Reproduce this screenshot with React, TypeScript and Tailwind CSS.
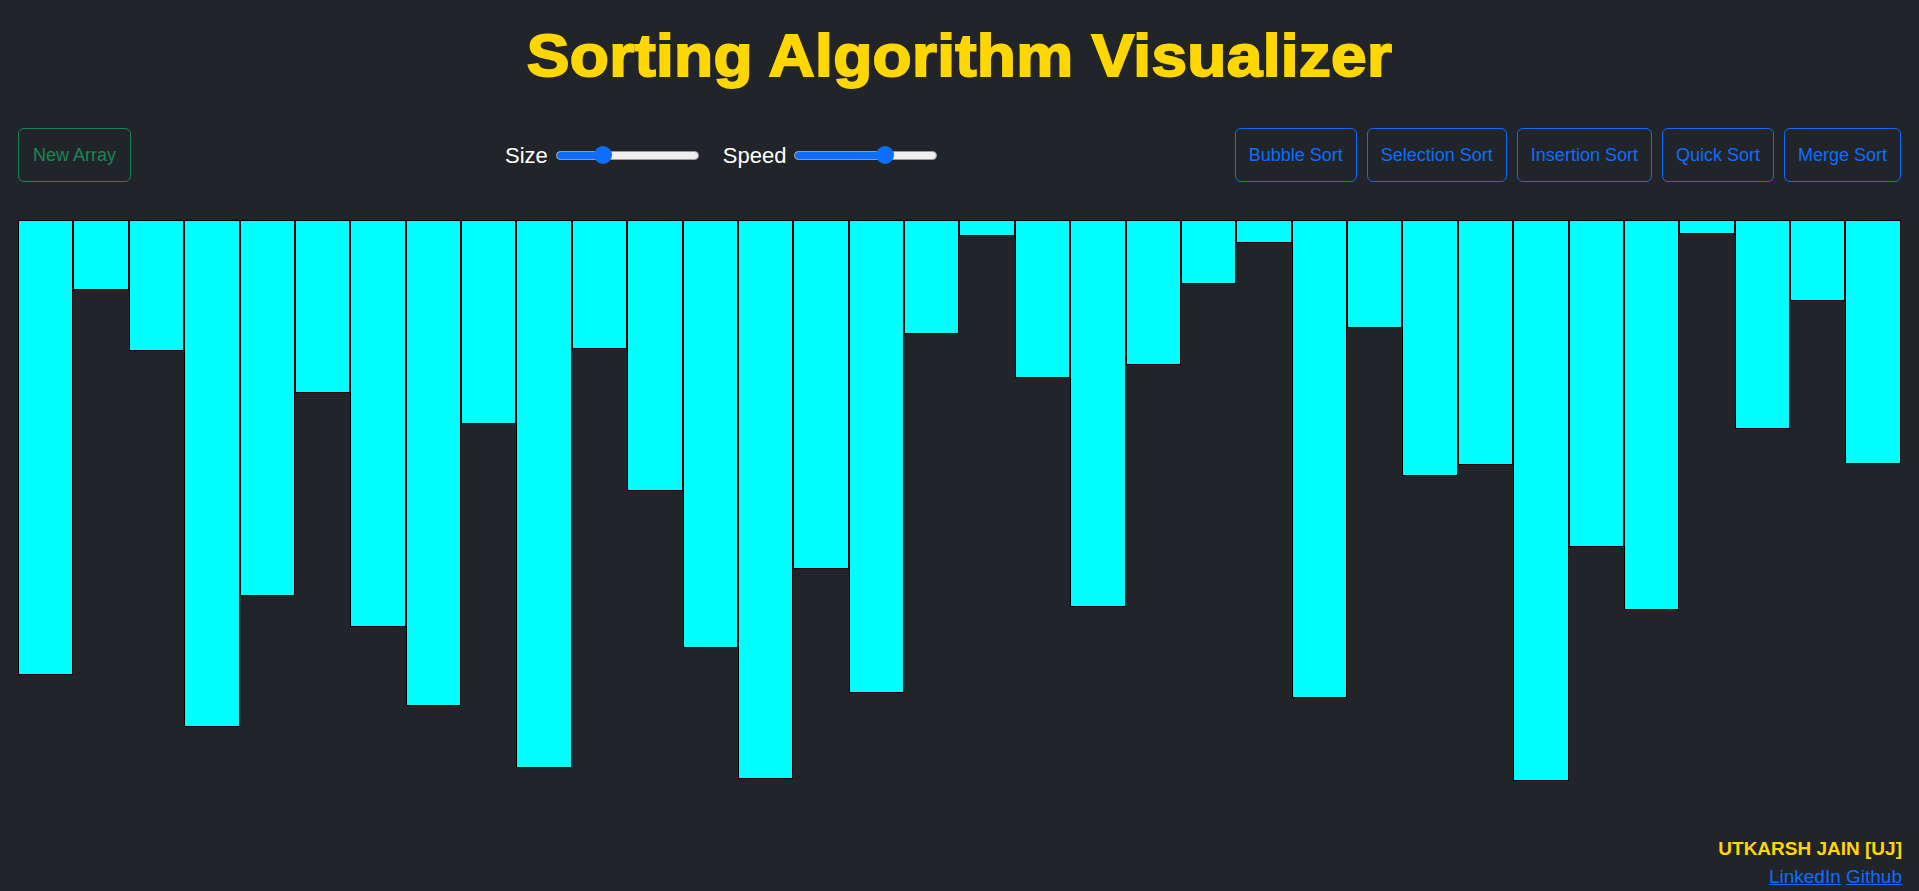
const bars = [
  455, 70, 131, 507, 376, 173, 407, 486, 204, 548, 129, 271, 428, 559, 349, 473, 114,
  16, 158, 387, 145, 64, 23, 478, 108, 256, 245, 561, 327, 390, 14, 209, 81, 244,
]

const sorts = ["Bubble Sort", "Selection Sort", "Insertion Sort", "Quick Sort", "Merge Sort"]

function Slider({ value }: { value: number }) {
  return (
    <div className="relative flex h-[18px] w-[143px] items-center">
      <div className="h-[9px] w-full overflow-hidden rounded-full border border-[#9a9a9a] bg-[#efefef]">
        <div className="h-full bg-[#0d6efd]" style={{ width: `${value * 100}%` }} />
      </div>
      <div
        className="absolute top-0 h-[18px] w-[18px] -translate-x-1/2 rounded-full bg-[#0d6efd]"
        style={{ left: `${value * 100}%` }}
      />
    </div>
  )
}

function Controls() {
  return (
    <div className="mt-[42px] flex h-[54px] items-center px-[18px]">
      <button className="h-[54px] rounded-[6px] border border-[#198754] px-[14px] text-[18px] text-[#198754]">
        New Array
      </button>
      <div className="ml-[374px] flex items-center">
        <span className="mr-[8px] text-[22px] text-white">Size</span>
        <Slider value={0.33} />
        <span className="ml-[24px] mr-[8px] text-[22px] text-white">Speed</span>
        <Slider value={0.63} />
      </div>
      <div className="ml-auto flex gap-[10px]">
        {sorts.map((s) => (
          <button key={s} className="h-[54px] rounded-[6px] border border-[#0d6efd] px-[13px] text-[18px] text-[#0d6efd]">
            {s}
          </button>
        ))}
      </div>
    </div>
  )
}

function Bars() {
  return (
    <div className="mx-[18px] mt-[38px] flex h-[619px] items-start">
      {bars.map((h, i) => (
        <div key={i} className="flex-1 border border-black bg-[#00ffff]" style={{ height: h }} />
      ))}
    </div>
  )
}

export default function App() {
  return (
    <div className="min-h-screen bg-[#212529] font-['Liberation_Sans',Arial,sans-serif]">
      <div className="pt-[24px] text-center">
        <h1 className="scale-y-[0.92] text-[64px] font-bold leading-none tracking-[0.3px] text-[#ffd700] [-webkit-text-stroke:2px_#ffd700]">
          Sorting Algorithm Visualizer
        </h1>
      </div>
      <div className="-mt-[2px]">
        <Controls />
      </div>
      <Bars />
      <div className="flex flex-col items-end px-[17px]">
        <div className="text-[19px] font-bold leading-[20px] text-[#ffd700]">UTKARSH JAIN [UJ]</div>
        <div className="mt-[7px] text-[19px] leading-[22px]">
          <a href="#" className="text-[#0d6efd] underline">LinkedIn</a>{" "}
          <a href="#" className="text-[#0d6efd] underline">Github</a>
        </div>
      </div>
    </div>
  )
}
